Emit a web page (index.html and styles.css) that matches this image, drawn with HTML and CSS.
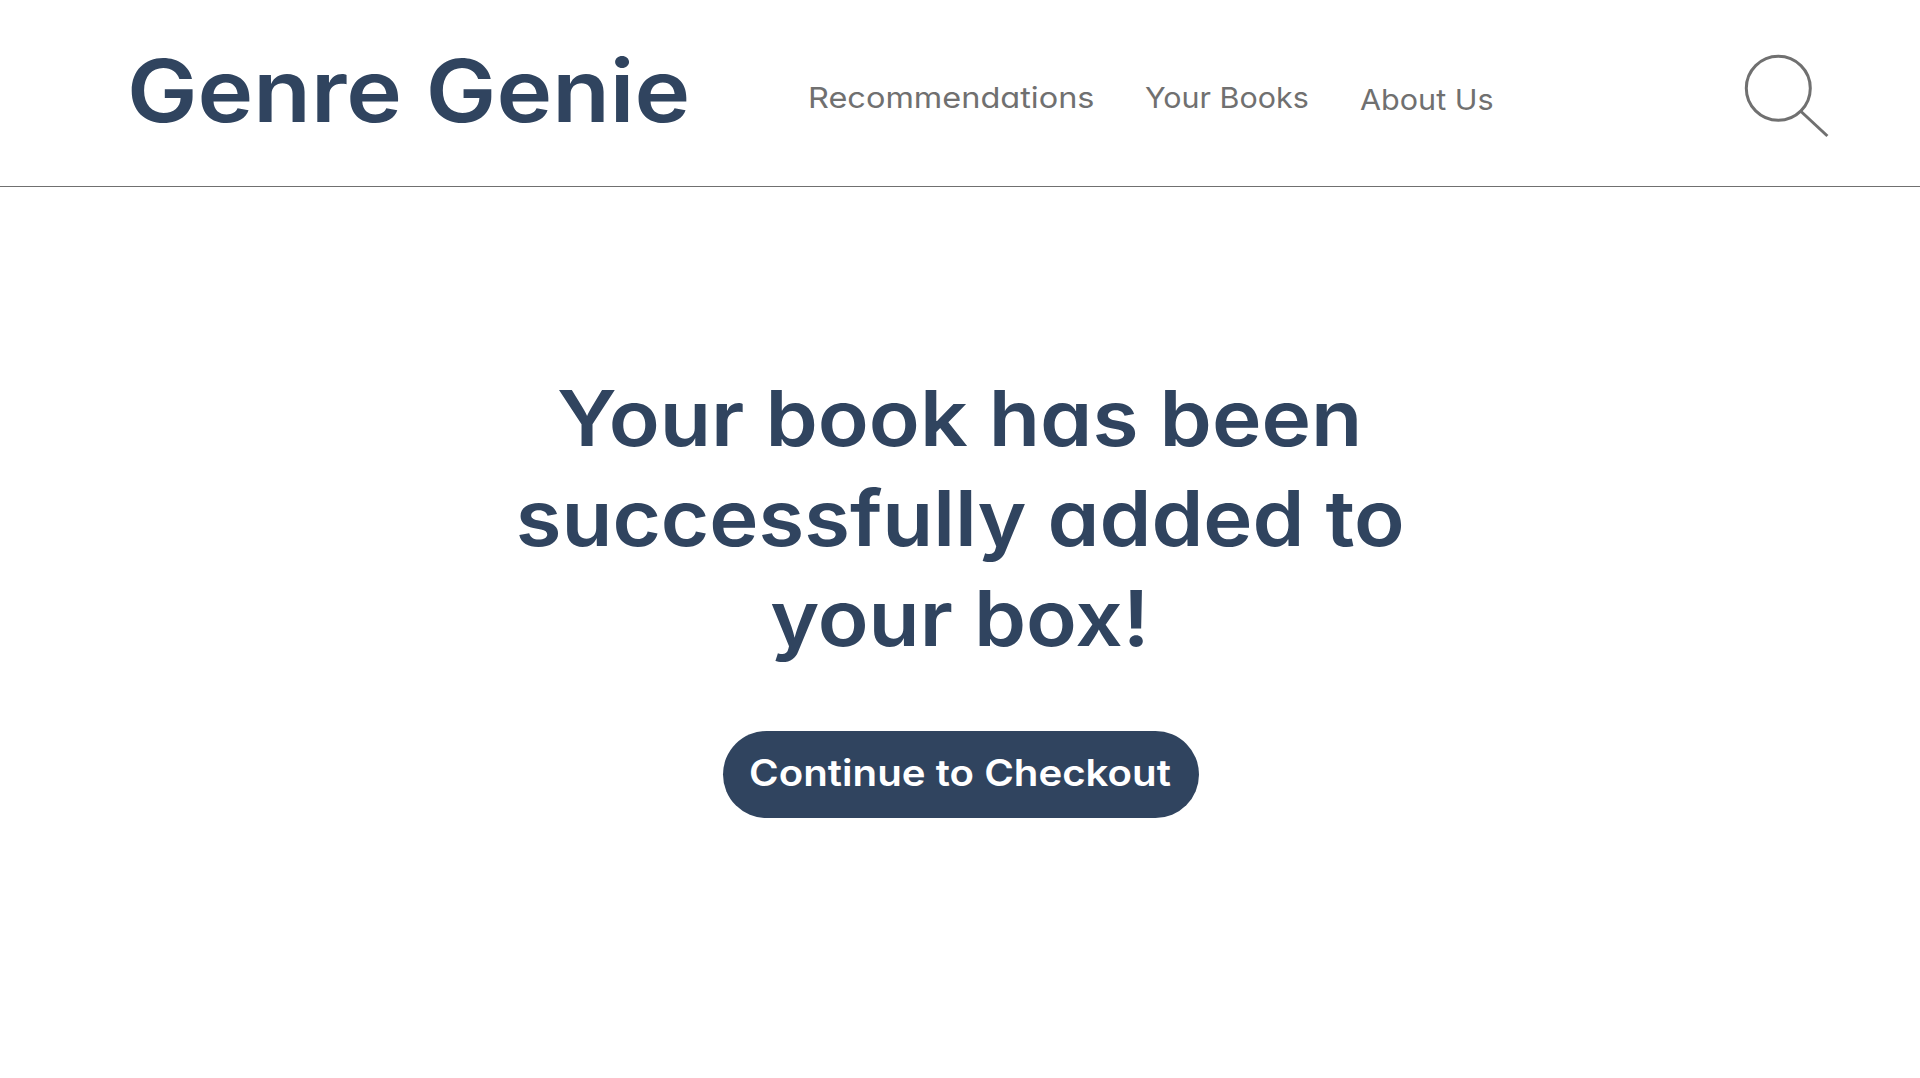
FILE: index.html
```html
<!DOCTYPE html>
<html lang="en">
<head>
  <meta charset="UTF-8" />
  <meta name="viewport" content="width=device-width, initial-scale=1.0"/>
  <title>Genre Genie</title>
  <link rel="stylesheet" href="styles.css">
</head>
<body>
  <header>
    <a href="#" class="logo">Genre Genie</a>
    <nav>
      <a href="#" class="nav-recommendations">Recommendations</a>
      <a href="#" class="nav-books">Your Books</a>
      <a href="#" class="nav-about">About Us</a>
    </nav>
    <button class="search-btn" aria-label="Search">
      <svg width="86" height="86" viewBox="0 0 86 86" fill="none" stroke="#707070" stroke-width="3">
        <circle cx="34.3" cy="34.3" r="32"/>
        <path d="M56.5 57 L83.4 82"/>
      </svg>
    </button>
  </header>

  <main>
    <h1 class="message">
      <span class="line-one">Your book has been</span>
      <span class="line-two">successfully added to</span>
      <span class="line-three">your box!</span>
    </h1>
    <button class="checkout-btn"><span>Continue to Checkout</span></button>
  </main>
</body>
</html>
```
FILE: styles.css
```css
* { box-sizing: border-box; }
body {
  margin: 0;
  padding: 0;
  font-family: Inter, "Open Sans", sans-serif;
  font-feature-settings: "cv11";
  background-color: #fff;
  color: #30445f;
}
header {
  height: 187px;
  padding: 0 90px 0 127px;
  display: flex;
  align-items: flex-start;
  border-bottom: 1px solid #707070;
}
.logo {
  width: 681px;
  margin-top: 41px;
  font-size: 86px;
  line-height: 100px;
  font-weight: 600;
  color: #30445f;
  text-decoration: none;
  white-space: nowrap;
  transform: scaleX(1.096);
  transform-origin: left;
}
nav {
  display: flex;
  flex: 1;
  margin-top: 78px;
}
nav a {
  font-size: 29px;
  line-height: 40px;
  color: #707070;
  text-decoration: none;
  white-space: nowrap;
  transform-origin: left;
}
.nav-recommendations {
  width: 337px;
  transform: scaleX(1.12);
}
.nav-books {
  width: 215px;
  transform: scaleX(1.05);
}
.nav-about {
  margin-top: 2px;
  transform: scaleX(1.053);
}
.search-btn {
  margin-top: 54px;
  padding: 0;
  border: none;
  background: none;
  cursor: pointer;
}
.search-btn svg {
  display: block;
}
main {
  padding-top: 181px;
  display: flex;
  flex-direction: column;
  align-items: center;
}
.message {
  margin: 0;
  display: flex;
  flex-direction: column;
  align-items: center;
  font-size: 77px;
  line-height: 100px;
  font-weight: 600;
  white-space: nowrap;
}
.line-one {
  transform: scaleX(1.089);
}
.line-two {
  transform: scaleX(1.081);
}
.line-three {
  transform: scaleX(1.085);
}
.checkout-btn {
  width: 476px;
  height: 87px;
  margin-top: 63px;
  margin-left: 2px;
  padding: 0 2px 4px 0;
  border: none;
  border-radius: 44px;
  background-color: #30445f;
  color: #fff;
  font-family: inherit;
  font-feature-settings: inherit;
  font-size: 37px;
  font-weight: 600;
  white-space: nowrap;
  cursor: pointer;
}
.checkout-btn span {
  display: inline-block;
  transform: scaleX(1.087);
}
```
